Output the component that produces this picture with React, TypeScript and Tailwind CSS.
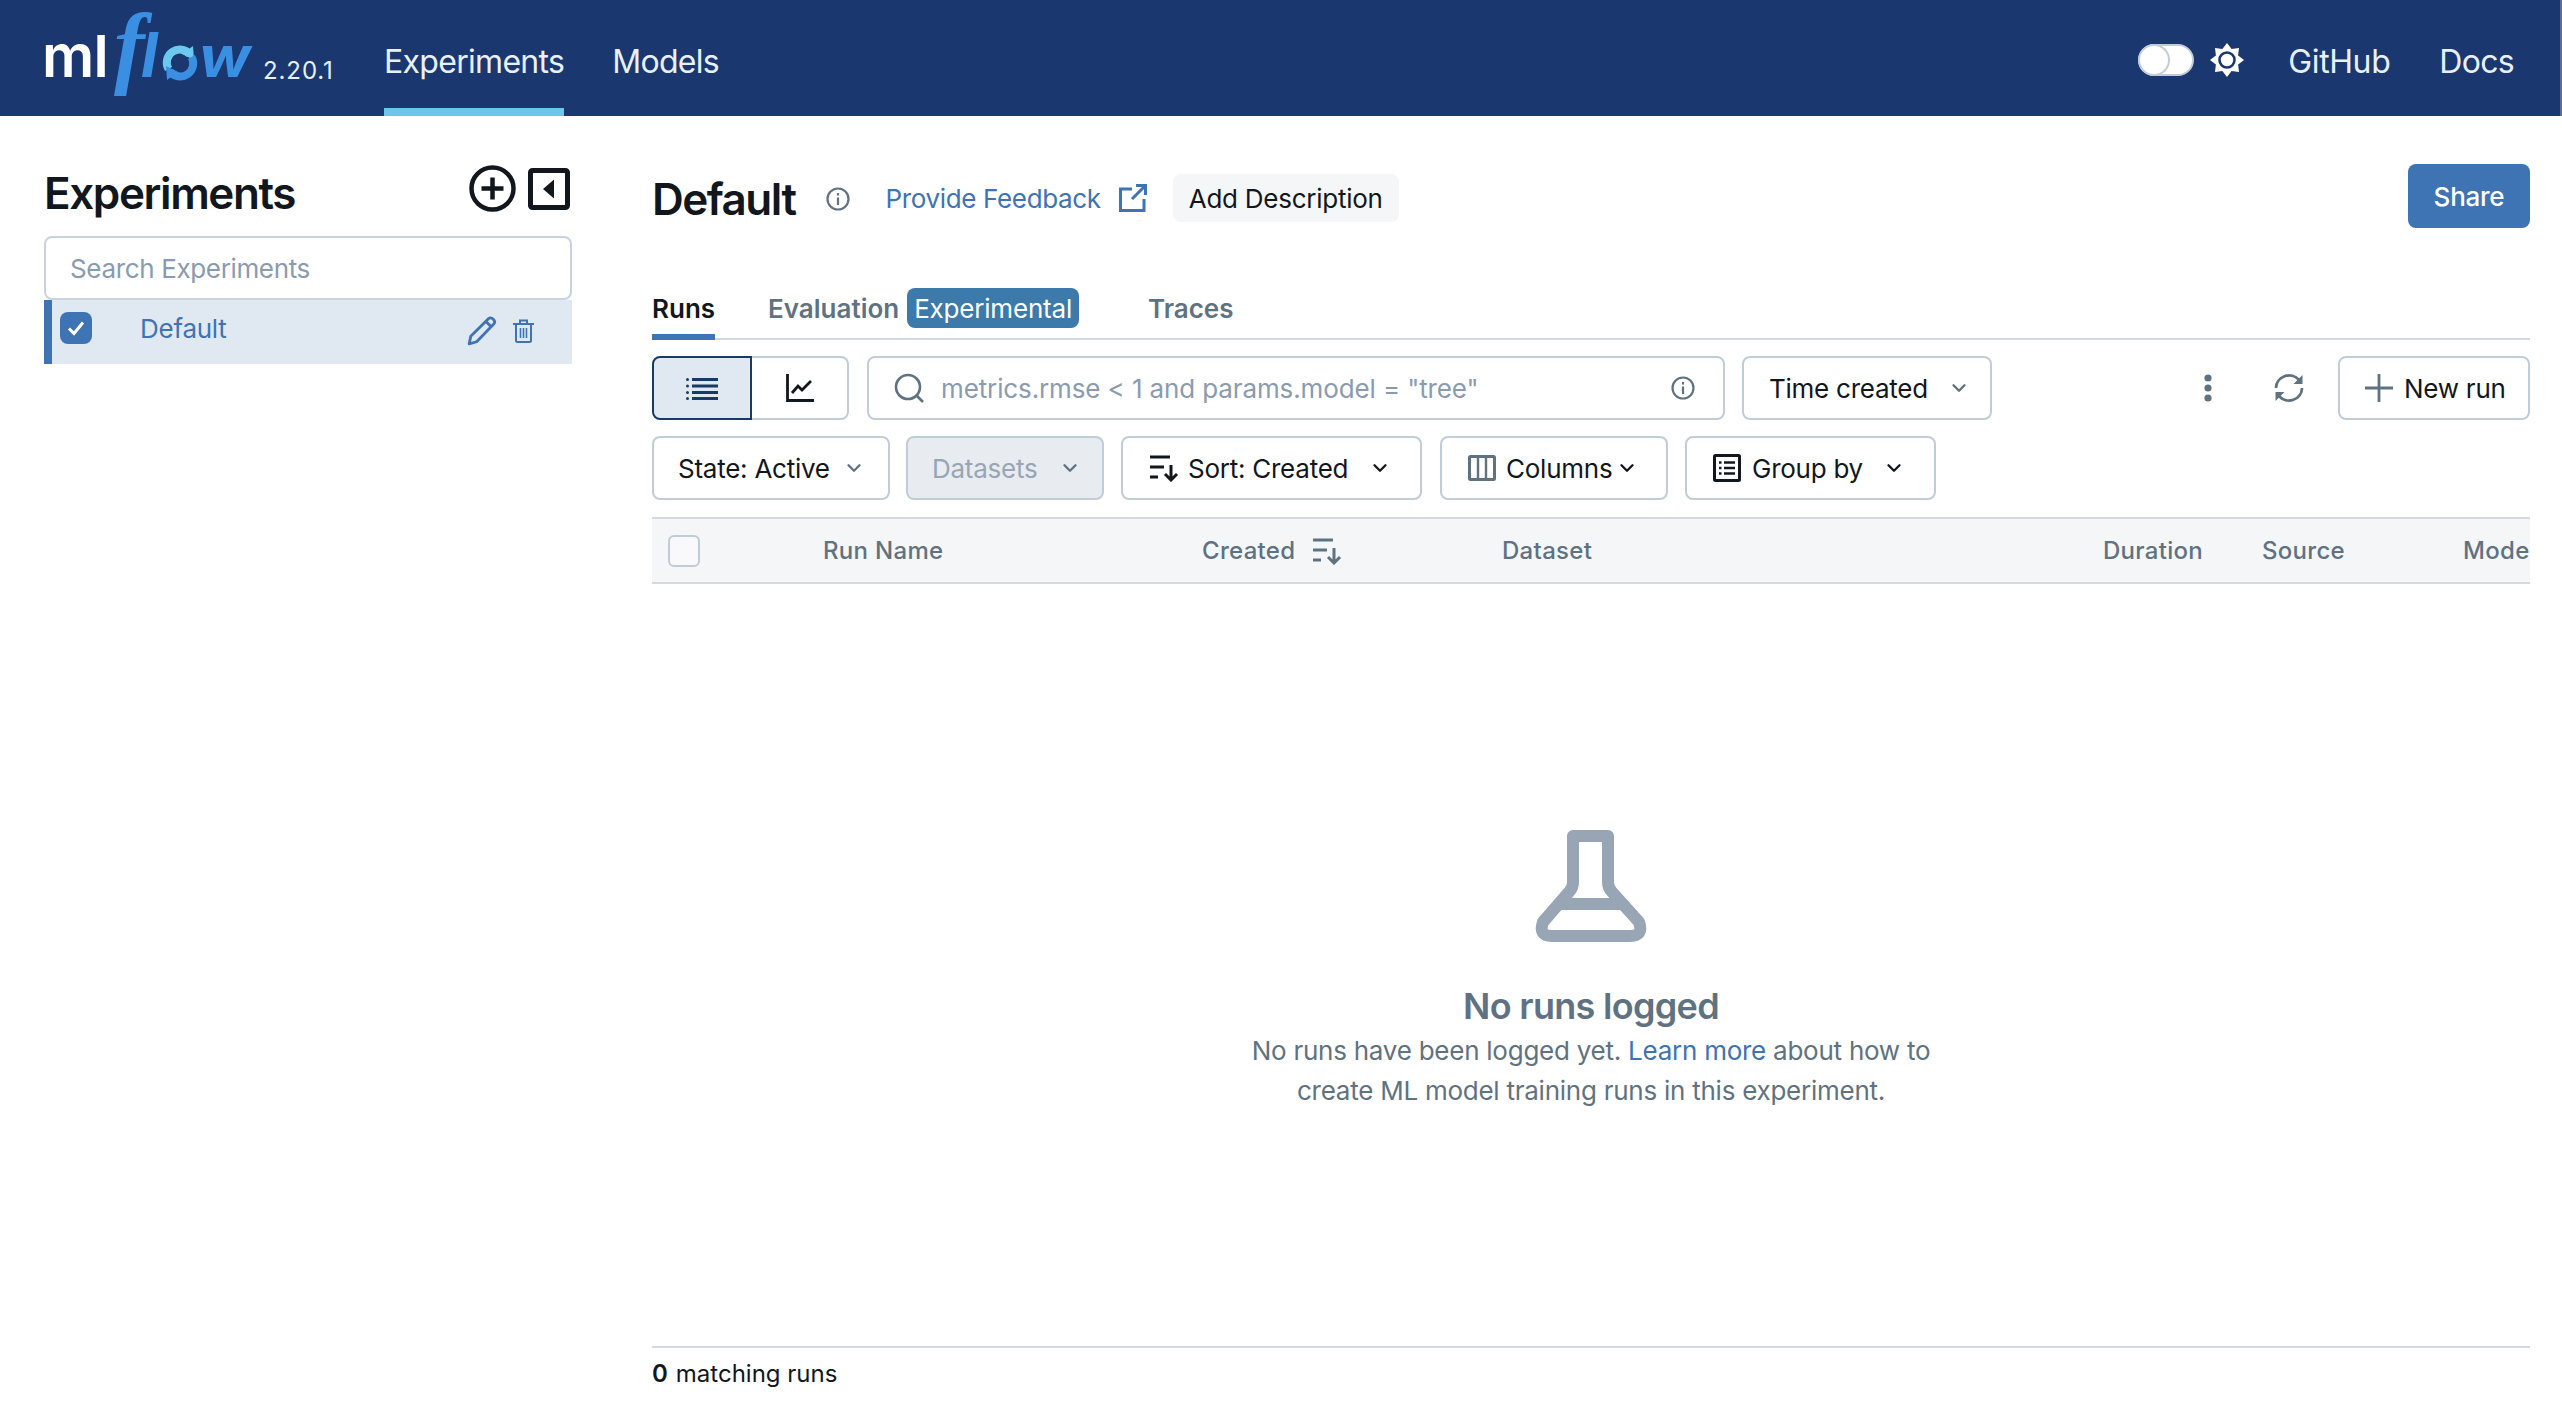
import { ChevronDown } from "lucide-react";

const SortIcon = ({ className }: { className?: string }) => (
  <svg viewBox="0 0 30 28" className={className} fill="none" stroke="currentColor" strokeWidth="3">
    <path d="M0 3H20M0 13H14M0 23H8" />
    <path d="M21 11V26M15 20l6 6 6-6" />
  </svg>
);

const Chevron = ({ className = "" }: { className?: string }) => (
  <ChevronDown className={`w-[22px] h-[22px] shrink-0 ${className}`} strokeWidth={2.6} />
);

const FilterButton = ({ width, children, disabled }: { width: string; children: React.ReactNode; disabled?: boolean }) => (
  <div
    className={`${width} h-[64px] shrink-0 flex items-center whitespace-nowrap rounded-lg border-2 border-[#c0cdd8] pl-[24px] ${
      disabled ? "bg-[#e8ebf0] text-[#97a5b5]" : "bg-white text-[#11171c]"
    }`}
  >
    {children}
  </div>
);

const Logo = () => (
  <svg width="219" height="116" viewBox="0 0 219 116" className="shrink-0 overflow-visible">
    <text x="-2" y="77" fontFamily="Inter" fontWeight="600" fontSize="58" fill="#ffffff" textLength="66" lengthAdjust="spacingAndGlyphs">ml</text>
    <text x="70" y="77" fontFamily="Liberation Serif" fontStyle="italic" fontWeight="700" fontSize="92" fill="#3b8fe2">f</text>
    <text x="97" y="77" fontFamily="Inter" fontStyle="italic" fontWeight="700" fontSize="62" fill="#3b8fe2">l</text>
    <path d="M124.5 69A13 13 0 0 1 146 54.5" fill="none" stroke="#6cc8ee" strokeWidth="8" />
    <path d="M150 60l-1-14-11 8z" fill="#6cc8ee" />
    <path d="M147.5 57A13 13 0 0 1 126 71.5" fill="none" stroke="#3b8fe2" strokeWidth="8" />
    <path d="M122 66l1 14 11-8z" fill="#3b8fe2" />
    <text x="155" y="77" fontFamily="Inter" fontStyle="italic" fontWeight="700" fontSize="56" fill="#3b8fe2" textLength="51" lengthAdjust="spacingAndGlyphs">w</text>
  </svg>
);

export default function App() {
  return (
    <div className="h-screen overflow-hidden flex flex-col bg-white font-['Inter',sans-serif] text-[26px] tracking-[-0.25px] text-[#11171c]">
      <header className="h-[116px] shrink-0 flex bg-[#1a3770] border-r-2 border-[#5b6f96] pl-[44px] pr-[46px] text-[32px] tracking-[-0.7px] text-[#e8f0fa]">
        <Logo />
        <span className="mt-[57px] w-[121px] text-[24px] leading-[28px] tracking-[0.9px]">2.20.1</span>
        <div className="h-full flex items-center pt-[16px] border-b-[8px] border-[#6ec6ea]">Experiments</div>
        <div className="ml-[48px] h-full flex items-center pt-[16px] border-b-[8px] border-transparent">Models</div>
        <div className="ml-auto flex items-center gap-[16px] pt-[8px]">
          <div className="relative w-[56px] h-[32px] rounded-full bg-white border-2 border-[#c0cdd8] -mt-[4px]">
            <div className="absolute -left-[2px] -top-[2px] w-[32px] h-[32px] rounded-full bg-white border-2 border-[#c0cdd8]" />
          </div>
          <svg viewBox="-17 -17 34 34" className="w-[34px] h-[34px] -mt-[4px]">
            <polygon
              fill="#ffffff"
              points="0,-17 4.6,-11.1 12,-12 11.1,-4.6 17,0 11.1,4.6 12,12 4.6,11.1 0,17 -4.6,11.1 -12,12 -11.1,4.6 -17,0 -11.1,-4.6 -12,-12 -4.6,-11.1"
            />
            <circle r="7.5" fill="#ffffff" stroke="#1a3770" strokeWidth="2.6" />
          </svg>
          <span className="ml-[28px] tracking-[-0.4px]">GitHub</span>
          <span className="ml-[33px]">Docs</span>
        </div>
      </header>

      <div className="flex-1 flex min-h-0">
        <aside className="ml-[44px] w-[528px] shrink-0 pt-[49px]">
          <div className="h-[47px] flex items-center justify-between pr-[2px]">
            <h2 className="text-[44px] font-semibold leading-[47px] tracking-[-1.4px] pt-[10px]">Experiments</h2>
            <div className="flex items-center gap-[12px]">
              <svg viewBox="0 0 47 47" className="w-[47px] h-[47px] text-[#11171c]" fill="none" stroke="currentColor">
                <circle cx="23.5" cy="23.5" r="21" strokeWidth="4.5" />
                <path d="M23.5 12.5v22M12.5 23.5h22" strokeWidth="4.5" />
              </svg>
              <svg viewBox="0 0 42 42" className="w-[42px] h-[42px] text-[#11171c]">
                <rect x="2.5" y="2.5" width="37" height="37" rx="2" fill="none" stroke="currentColor" strokeWidth="5" />
                <path d="M26 11.5V30.5L15 21Z" fill="currentColor" />
              </svg>
            </div>
          </div>
          <div className="mt-[24px] h-[64px] flex items-center rounded-lg border-2 border-[#c9d3dd] px-[24px] tracking-[-0.35px] text-[#8a9bb0]">
            Search Experiments
          </div>
          <div className="h-[64px] flex items-center bg-[#e0e8f2] border-l-[8px] border-[#3e73b4] pl-[8px] pb-[8px]">
            <div className="w-[32px] h-[32px] rounded-lg bg-[#3e73b4] flex items-center justify-center">
              <svg viewBox="0 0 20 20" className="w-[20px] h-[20px]" fill="none" stroke="#ffffff" strokeWidth="3">
                <path d="M3 10.5l5 5 9-11" />
              </svg>
            </div>
            <span className="ml-[48px] text-[#3e73b4]">Default</span>
            <svg viewBox="0 0 28 28" className="ml-auto w-[30px] h-[30px] mt-[6px]" fill="none" stroke="#3e73b4" strokeWidth="2.6" strokeLinejoin="round">
              <path d="M2 26l1.5-7L20 2.5c1.5-1 3-1 4.5.5s2 3 .5 4.5L9 24z" />
              <path d="M17.5 5l5.5 5.5" />
            </svg>
            <svg viewBox="0 0 21 24" className="ml-[16px] mr-[38px] w-[21px] h-[24px] mt-[5px]" fill="none" stroke="#3e73b4" strokeWidth="2">
              <path d="M0 5H21M7 5V1.5H14V5M3 5V21.5C3 22.3 3.7 23 4.5 23H16.5C17.3 23 18 22.3 18 21.5V5" />
              <path d="M7.5 9V19M10.5 9V19M13.5 9V19" strokeWidth="1.6" />
            </svg>
          </div>
        </aside>

        <main className="ml-[80px] w-[1878px] shrink-0 flex flex-col pt-[48px]">
          <div className="h-[64px] shrink-0 flex items-center">
            <h1 className="text-[44px] font-semibold leading-none tracking-[-1.5px] mt-[6px]">Default</h1>
            <svg viewBox="0 0 24 24" className="ml-[30px] w-[24px] h-[24px] mt-[6px]" fill="none" stroke="#5f7281" strokeWidth="2.2">
              <circle cx="12" cy="12" r="10.5" />
              <path d="M12 10.5V18M12 6v2.6" />
            </svg>
            <span className="ml-[36px] text-[#3e73b4] tracking-[-0.35px] mt-[4px]">Provide Feedback</span>
            <svg viewBox="0 0 28 28" className="ml-[18px] w-[28px] h-[28px] mt-[4px]" fill="none" stroke="#3e73b4" strokeWidth="3">
              <path d="M13 5H1.5V26.5H25V15" />
              <path d="M13 15L26 2M17 1.5H26.5V11" />
            </svg>
            <div className="ml-[26px] h-[48px] flex items-center rounded-lg bg-[#f5f6f8] px-[16px] mt-[4px]">Add Description</div>
            <div className="ml-auto h-[64px] w-[122px] flex items-center justify-center rounded-lg bg-[#3e73b4] text-white font-medium">Share</div>
          </div>

          <div className="mt-[60px] h-[52px] shrink-0 flex border-b-2 border-[#d1d9e1] font-semibold tracking-normal text-[#5f7281]">
            <div className="h-[52px] flex items-start pt-[1px] border-b-[6px] border-[#3e73b4] text-[#11171c]">Runs</div>
            <div className="ml-[53px] flex items-start pt-[1px]">Evaluation</div>
            <div className="ml-[8px] h-[40px] flex items-center rounded-lg bg-[#3c7aab] px-[7px] text-white font-normal tracking-[-0.2px]">Experimental</div>
            <div className="ml-[69px] flex items-start pt-[1px]">Traces</div>
          </div>

          <div className="mt-[16px] h-[64px] shrink-0 flex items-center">
            <div className="w-[197px] h-[64px] flex">
              <div className="w-[100px] flex items-center justify-center rounded-l-lg border-2 border-[#1a3a66] bg-[#e0e8f2]">
                <svg viewBox="0 0 32 24" className="w-[32px] h-[24px]" fill="#1a3a66">
                  <path d="M6 2h26v3H6zM6 8.5h26v3H6zM6 15h26v3H6zM6 21h26v3H6z" />
                  <circle cx="1.5" cy="3.5" r="1.5" /><circle cx="1.5" cy="10" r="1.5" /><circle cx="1.5" cy="16.5" r="1.5" /><circle cx="1.5" cy="22.5" r="1.5" />
                </svg>
              </div>
              <div className="flex-1 flex items-center justify-center rounded-r-lg border-2 border-l-0 border-[#c0cdd8]">
                <svg viewBox="0 0 28 28" className="w-[28px] h-[28px]" fill="none" stroke="#11171c" strokeWidth="2.8">
                  <path d="M1.5 0V26.5H28" />
                  <path d="M6 19l6-7 4 4 9-9" />
                </svg>
              </div>
            </div>
            <div className="ml-[18px] w-[858px] h-[64px] flex items-center rounded-lg border-2 border-[#c0cdd8] pl-[25px] pr-[28px] tracking-[-0.12px] text-[#8a9bb0]">
              <svg viewBox="0 0 30 30" className="w-[30px] h-[30px] shrink-0" fill="none" stroke="#5f7281" strokeWidth="2.6">
                <circle cx="14" cy="14" r="12" />
                <path d="M22.5 22.5L29 29" />
              </svg>
              <span className="ml-[17px]">metrics.rmse &lt; 1 and params.model = "tree"</span>
              <svg viewBox="0 0 24 24" className="ml-auto w-[24px] h-[24px]" fill="none" stroke="#5f7281" strokeWidth="2.2">
                <circle cx="12" cy="12" r="10.5" />
                <path d="M12 10.5V18M12 6v2.6" />
              </svg>
            </div>
            <div className="ml-[17px] w-[250px] h-[64px] flex items-center rounded-lg border-2 border-[#c0cdd8] pl-[25px]">
              Time created
              <Chevron className="ml-[20px] text-[#5f7281]" />
            </div>
            <svg viewBox="0 0 8 28" className="ml-[212px] w-[8px] h-[28px]" fill="#5f7281">
              <circle cx="4" cy="4" r="3.6" /><circle cx="4" cy="14" r="3.6" /><circle cx="4" cy="24" r="3.6" />
            </svg>
            <svg viewBox="0 0 30 28" className="ml-[62px] w-[30px] h-[28px]" fill="none" stroke="#5f7281" strokeWidth="2.8">
              <path d="M2 14A13 12.5 0 0 1 25 6" />
              <path d="M28 14A13 12.5 0 0 1 5 22" />
              <path d="M28.5 1v9h-9z" fill="#5f7281" stroke="none" />
              <path d="M1.5 27v-9h9z" fill="#5f7281" stroke="none" />
            </svg>
            <div className="ml-auto w-[192px] h-[64px] flex items-center rounded-lg border-2 border-[#c0cdd8] pl-[25px]">
              <svg viewBox="0 0 28 28" className="w-[28px] h-[28px] shrink-0" fill="none" stroke="#5f7281" strokeWidth="2.8">
                <path d="M14 0V28M0 14H28" />
              </svg>
              <span className="ml-[11px]">New run</span>
            </div>
          </div>

          <div className="mt-[16px] h-[64px] shrink-0 flex items-center">
            <FilterButton width="w-[238px]">
              State: Active
              <Chevron className="ml-[13px] text-[#5f7281]" />
            </FilterButton>
            <div className="w-[16px] shrink-0" />
            <FilterButton width="w-[198px]" disabled>
              Datasets
              <Chevron className="ml-[22px] text-[#5f7281]" />
            </FilterButton>
            <div className="w-[17px] shrink-0" />
            <FilterButton width="w-[301px]">
              <SortIcon className="ml-[3px] w-[30px] h-[28px] shrink-0" />
              <span className="ml-[8px]">Sort: Created</span>
              <Chevron className="ml-[21px]" />
            </FilterButton>
            <div className="w-[18px] shrink-0" />
            <FilterButton width="w-[228px]">
              <svg viewBox="0 0 28 26" className="ml-[2px] w-[28px] h-[26px] shrink-0" fill="none" stroke="#5f7281" strokeWidth="3">
                <rect x="1.5" y="1.5" width="25" height="23" rx="1" />
                <path d="M10 1.5V24.5M18 1.5V24.5" strokeWidth="2.4" />
              </svg>
              <span className="ml-[10px]">Columns</span>
              <Chevron className="ml-[4px]" />
            </FilterButton>
            <div className="w-[17px] shrink-0" />
            <FilterButton width="w-[251px]">
              <svg viewBox="0 0 28 28" className="ml-[2px] w-[28px] h-[28px] shrink-0" fill="none" stroke="#11171c" strokeWidth="3">
                <rect x="1.5" y="1.5" width="25" height="25" rx="1" />
                <path d="M11 8.5H22M11 14H22M11 19.5H22M6 8.5H8.5M6 14H8.5M6 19.5H8.5" strokeWidth="2.4" />
              </svg>
              <span className="ml-[11px]">Group by</span>
              <Chevron className="ml-[20px]" />
            </FilterButton>
          </div>

          <div className="mt-[17px] h-[67px] shrink-0 flex items-center overflow-hidden bg-[#f5f6f8] border-y-2 border-[#d1d9e1] text-[24px] font-medium tracking-[0.3px] text-[#5f7281]">
            <div className="w-[171px] shrink-0 pl-[16px]">
              <div className="w-[32px] h-[32px] rounded-md border-2 border-[#c0cdd8] bg-white/40" />
            </div>
            <div className="w-[379px] shrink-0">Run Name</div>
            <div className="w-[300px] shrink-0 flex items-center">
              Created
              <SortIcon className="ml-[18px] w-[30px] h-[28px]" />
            </div>
            <div className="w-[601px] shrink-0">Dataset</div>
            <div className="w-[159px] shrink-0">Duration</div>
            <div className="w-[201px] shrink-0">Source</div>
            <div className="shrink-0">Models</div>
          </div>

          <div className="flex-1 flex flex-col items-center pt-[246px] text-[#5f7281]">
            <svg viewBox="0 0 112 112" className="w-[112px] h-[112px]" fill="none" stroke="#97a5b5" strokeWidth="12" strokeLinejoin="round">
              <path d="M38 6H73V52Q73 58 77 62L104 92Q109 106 95 106H17Q3 106 8 92L34 62Q38 58 38 52Z" />
              <path d="M22 74H90" />
            </svg>
            <h3 className="mt-[40px] text-[36px] font-semibold leading-[48px] tracking-[-0.7px]">No runs logged</h3>
            <p className="mt-[1px] w-[720px] text-center leading-[40px]">
              No runs have been logged yet. <span className="text-[#3e73b4]">Learn more</span> about how to create ML model training runs in this experiment.
            </p>
          </div>

          <div className="h-[74px] shrink-0 border-t-2 border-[#d1d9e1] flex items-center text-[24px] tracking-normal pb-[20px]">
            <span className="font-semibold">0</span>
            <span className="ml-[8px]">matching runs</span>
          </div>
        </main>
      </div>
    </div>
  );
}
